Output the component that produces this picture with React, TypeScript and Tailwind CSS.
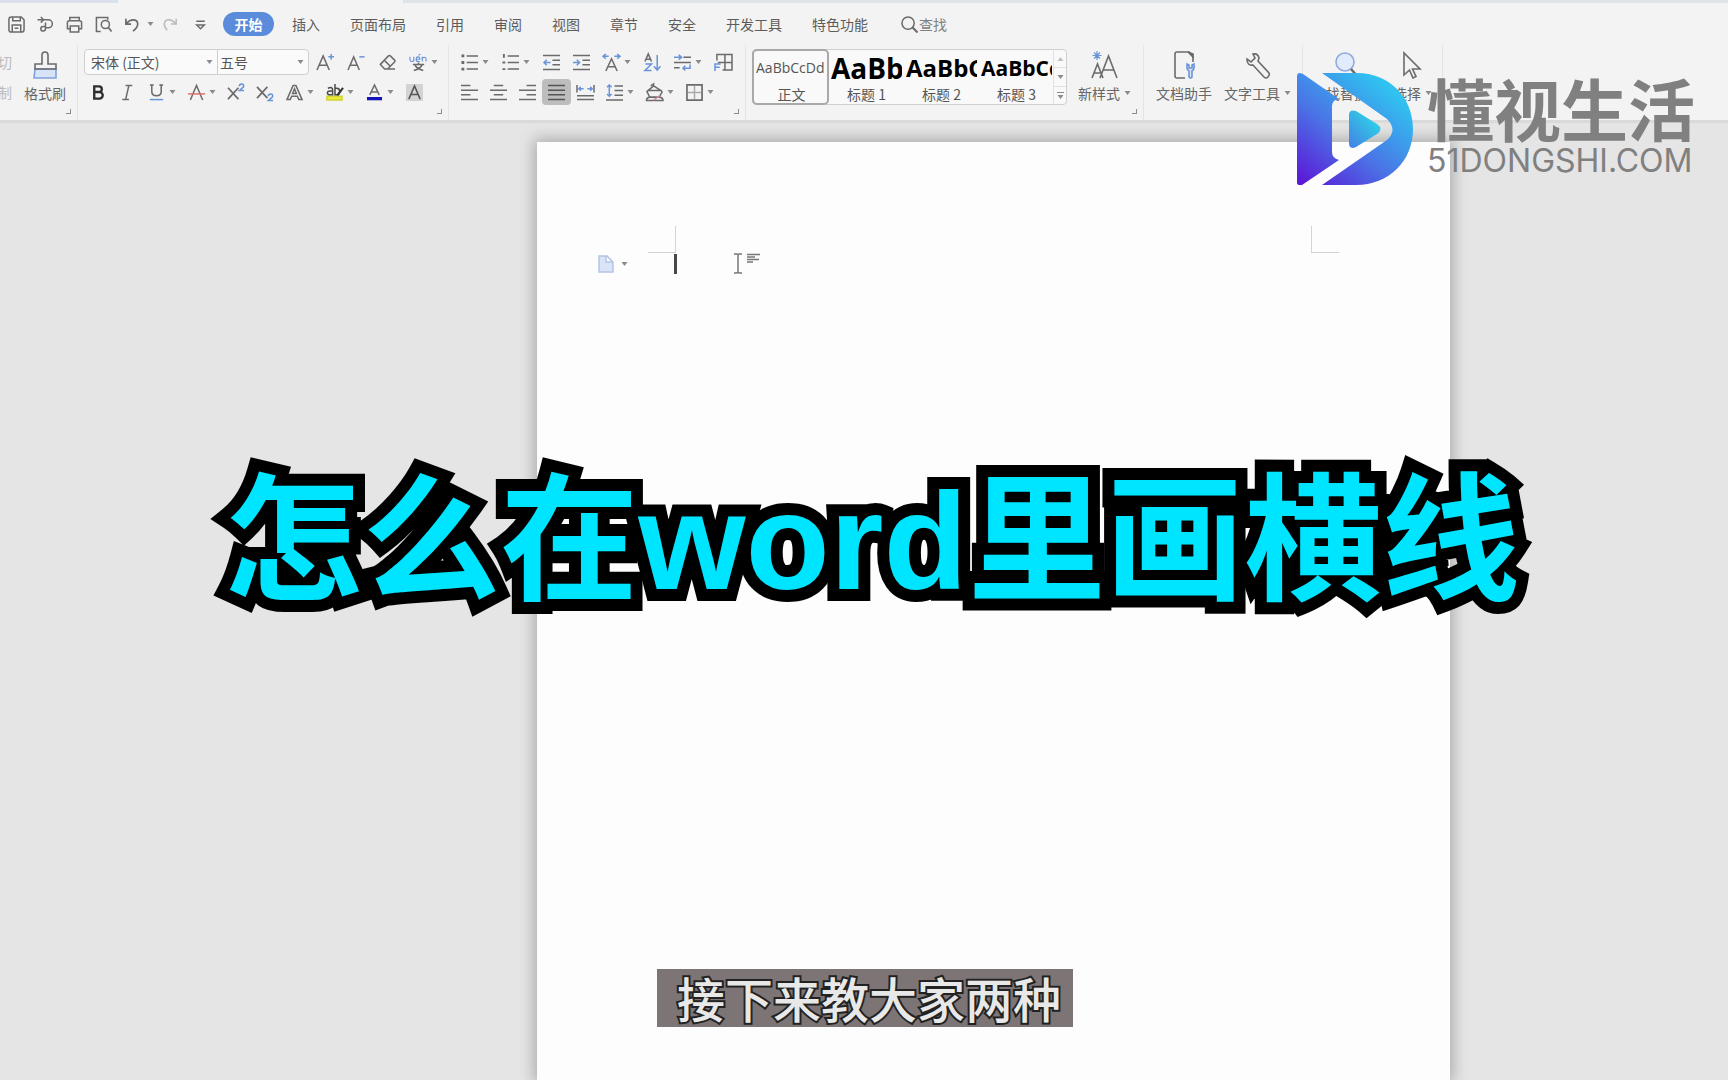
import type { ReactNode } from "react";
import clsx from "clsx";

const tabs = ["插入", "页面布局", "引用", "审阅", "视图", "章节", "安全", "开发工具", "特色功能"];

const styles = [
  { name: "正文", sample: "AaBbCcDd", className: "text-sm text-[#555]", active: true },
  { name: "标题 1", sample: "AaBbCc", className: "text-[28px] font-bold text-black" },
  { name: "标题 2", sample: "AaBbCc", className: "text-[24px] font-bold text-black" },
  { name: "标题 3", sample: "AaBbCcD", className: "text-[21px] font-bold text-black" },
];

const Icon = ({ children, className }: { children: ReactNode; className?: string }) => (
  <svg
    viewBox="0 0 18 18"
    className={clsx("w-[17px] h-[17px] shrink-0 overflow-visible", className)}
    fill="none"
    stroke="#6b6b6b"
    strokeWidth="1.6"
    aria-hidden="true"
  >
    {children}
  </svg>
);

const Caret = ({ className }: { className?: string }) => (
  <svg viewBox="0 0 7 4" className={clsx("w-[7px] h-1 shrink-0", className)} fill="#8a8a8a" aria-hidden="true">
    <path d="M0.5 0h6L3.5 4z" />
  </svg>
);

const Tool = ({
  label,
  caret,
  active,
  children,
}: {
  label: string;
  caret?: boolean;
  active?: boolean;
  children: ReactNode;
}) => (
  <button
    aria-label={label}
    className={clsx("h-[26px] px-1.5 flex items-center gap-1 shrink-0", active && "bg-[#bdbdbd] rounded")}
  >
    <Icon>{children}</Icon>
    {caret && <Caret />}
  </button>
);

const BigTool = ({ label, caret, children }: { label: string; caret?: boolean; children: ReactNode }) => (
  <button className="h-14 pt-0.5 flex flex-col items-center shrink-0">
    <svg viewBox="0 0 28 28" className="w-7 h-7" fill="none" stroke="#6b6b6b" strokeWidth="1.6" aria-hidden="true">
      {children}
    </svg>
    <span className="mt-1 flex items-center gap-1 leading-5 whitespace-nowrap">
      {label}
      {caret && <Caret />}
    </span>
  </button>
);

const Group = ({ corner, className, children }: { corner?: boolean; className?: string; children: ReactNode }) => (
  <div className={clsx("flex flex-col pt-1 border-r border-[#e4e4e4] shrink-0", className)}>
    {children}
    {corner && <span className="mt-1 mr-1.5 self-end w-[5px] h-[5px] border-r border-b border-[#8c8c8c]" />}
  </div>
);

const QuickAccess = () => (
  <div className="flex items-center pl-2">
    <button aria-label="保存" className="w-[29px]">
      <Icon>
        <path d="M1 3.500Q1 1 3.500 1H14l3 3v10.500Q17 17 14.500 17h-11Q1 17 1 14.500zM5 1v4h8V1M4.500 17V9.500h9V17M7 13h4" />
      </Icon>
    </button>
    <button aria-label="输出为PDF" className="w-[29px]">
      <Icon>
        <path d="M0.500 4H12a4 4 0 0 1 0 8.500H9V13q0 3-2.500 3T4 13.500 6.500 11H9V7M4 1l3 3-3 3" />
      </Icon>
    </button>
    <button aria-label="打印" className="w-[29px]">
      <Icon>
        <path d="M4 5V1.500h10V5M4 13.500H1.500V7Q1.500 5 3.500 5h11Q16.500 5 16.500 7v6.500H14M4.500 10.500h9V17h-9z" />
      </Icon>
    </button>
    <button aria-label="打印预览" className="w-[29px]">
      <Icon>
        <path d="M6 16.500H1.500V1.500h12V4" />
        <circle cx="11" cy="9" r="4.300" />
        <path d="M14 12l3.500 4.500" strokeWidth="1.800" />
      </Icon>
    </button>
    <button aria-label="撤销" className="flex items-center gap-1.5">
      <Icon>
        <path d="M2 3v5.500h5.500M2.500 8Q6 4 9.500 4q5 0 5 4.500 0 4-5 7.500" strokeWidth="1.800" />
      </Icon>
      <Caret />
    </button>
    <button aria-label="恢复" className="ml-2 w-[30px]">
      <Icon className="opacity-40">
        <path d="M15 3v5.500H9.500M14.500 8Q11 4 7.500 4q-5 0-5 4.500 0 4 3 6.500" strokeWidth="1.600" />
      </Icon>
    </button>
    <button aria-label="自定义快速访问工具栏">
      <Icon>
        <path d="M4.500 5.500h9M5 9.500h8l-4 4z" />
      </Icon>
    </button>
  </div>
);

const TabBar = () => (
  <div className="h-[42px] flex items-center text-sm text-[#5c5c5c]">
    <QuickAccess />
    <button className="ml-3.5 w-[51px] h-6 rounded-full bg-[#5b8bdb] text-white font-bold leading-6">开始</button>
    <nav className="ml-[18px] flex gap-[30px]">
      {tabs.map((tab) => (
        <button key={tab} className="whitespace-nowrap">
          {tab}
        </button>
      ))}
    </nav>
    <label className="ml-[33px] flex items-center">
      <Icon>
        <circle cx="7.500" cy="7.500" r="6.500" />
        <path d="M12 12l5.500 5.500" strokeWidth="2.200" />
      </Icon>
      <input aria-label="查找" placeholder="查找" className="w-20 ml-px bg-transparent outline-none placeholder:text-[#808080]" />
    </label>
  </div>
);

const FontGroup = () => (
  <Group corner className="w-[371px] pl-1.5">
    <div className="flex items-center gap-0.5">
      <div className="flex h-[26px] rounded border border-[#cfcfcf] bg-[#fafafa] text-[#555]">
        <label className="flex items-center w-[133px] pr-1 border-r border-[#cfcfcf]">
          <select aria-label="字体" className="appearance-none w-full h-full pl-1.5 bg-transparent outline-none">
            <option>宋体 (正文)</option>
          </select>
          <Caret />
        </label>
        <label className="flex items-center w-[90px] pr-1">
          <select aria-label="字号" className="appearance-none w-full h-full pl-0.5 bg-transparent outline-none">
            <option>五号</option>
          </select>
          <Caret />
        </label>
      </div>
      <Tool label="增大字号">
        <path d="M0 17L6.500 2 13 17M2.500 12h8" />
        <path d="M15 0v6M12 3h6" stroke="#6a94d8" />
      </Tool>
      <Tool label="减小字号">
        <path d="M0 17L6 3l6 14M2.500 12H10" />
        <path d="M12 3h5.500" stroke="#6a94d8" />
      </Tool>
      <Tool label="清除格式">
        <path d="M1.500 11L10 2q1-1 2 0l4.500 4.500q1 1 0 2L9 16H6zM6 7l6 6M6 16h11" />
      </Tool>
      <Tool label="拼音指南" caret>
        <path d="M0 3v3q0 2 2 2t2-2V3v5M6.500 5.500h4Q10.500 3 8.500 3T6.500 5.500 8.500 8h2M13 8V3v3q0-2.500 2-2.500T17 5.500V8M9 1.500L11 0" stroke="#6a94d8" strokeWidth="1.200" />
        <path d="M3 11h12M9 9v2M13 11q-2 5-9 6.500M5 11q2 5 9 6.500" />
      </Tool>
    </div>
    <div className="flex items-center mt-1">
      <Tool label="加粗">
        <path d="M4.500 2.500v13H10a3.400 3.400 0 0 0 0-7H5h4.500a3 3 0 0 0 0-6z" stroke="#2e2e2e" strokeWidth="2.500" />
      </Tool>
      <Tool label="倾斜">
        <path d="M7 1.500h7M3.500 16.500h7M10.500 1.500l-3.500 15" />
      </Tool>
      <Tool label="下划线" caret>
        <path d="M4 1v7q0 4.500 5 4.500t5-4.500V1M2 1h4M12 1h4" />
        <path d="M2 16.500h14" stroke="#6a94d8" />
      </Tool>
      <Tool label="删除线" caret>
        <path d="M2.500 17L9 1.500 15.500 17" />
        <path d="M0 10.500h18" stroke="#e07070" />
      </Tool>
      <Tool label="上标">
        <path d="M0 4l11 12M11 4L0 16" strokeWidth="1.800" />
        <path d="M12 2.500Q12 0 14.500 0t2 3L12 7h5" stroke="#6a94d8" />
      </Tool>
      <Tool label="下标">
        <path d="M0 3l11 12M11 3L0 15" strokeWidth="1.800" />
        <path d="M12 13q0-2.500 2.500-2.500t2 3L12 17.500h5" stroke="#6a94d8" />
      </Tool>
      <Tool label="文字效果" caret>
        <path d="M1 16.500L7.500 1.500h3l6.500 15h-3.500L12 13H6l-1.500 3.500zM7 10l2-5 2 5z" />
      </Tool>
      <Tool label="突出显示" caret>
        <path d="M1 13h16v4H1z" fill="#e8ea3c" stroke="#d2d430" />
        <path d="M2 4.500Q7 2.500 7 6v5.500H4q-2.500 0-2.500-2.200T7 7.500M9.500 0v11.500h2q3 0 3-3.500t-3-3.500h-2" stroke="#4c4c4c" />
        <path d="M18 4l-6 8" stroke="#333" strokeWidth="2.200" />
      </Tool>
      <Tool label="字体颜色" caret>
        <path d="M4 11.500L9 1l5 10.500M5.500 8.500h7" />
        <path d="M1 15.500h16" stroke="#1414b8" strokeWidth="3.500" />
      </Tool>
      <Tool label="字符底纹">
        <path d="M0 0h18v18H0z" fill="#d3d3d3" stroke="none" />
        <path d="M3 16L9 2l6 14M5 11h8" stroke="#555" />
      </Tool>
    </div>
  </Group>
);

const ParagraphGroup = () => (
  <Group corner className="w-[297px] pl-1.5">
    <div className="flex items-center gap-px">
      <Tool label="项目符号" caret>
        <path d="M6 2h12M6 9h12M6 16h12" />
        <path d="M0.500 2h3M0.500 9h3M0.500 16h3" strokeWidth="3" />
      </Tool>
      <Tool label="编号" caret>
        <path d="M6 2h12M6 9h12M6 16h12" />
        <path d="M2 0v4M1 1h1M0.500 9h3M0.500 16h3" strokeWidth="2" />
      </Tool>
      <Tool label="减少缩进量">
        <path d="M0 1.500h18M10 6.500h8M10 11.500h8M0 16.500h18" />
        <path d="M8 9H1M4 6L1 9l3 3" stroke="#6a94d8" />
      </Tool>
      <Tool label="增加缩进量">
        <path d="M0 1.500h18M10 6.500h8M10 11.500h8M0 16.500h18" />
        <path d="M0 9h7M4 6l3 3-3 3" stroke="#6a94d8" />
      </Tool>
      <Tool label="中文版式" caret>
        <path d="M3 18L9 5l6 13M5 13.500h8" />
        <path d="M6 2.500H0M3 0L0 2.500 3 5M12 2.500h6M15 0l3 2.500L15 5" stroke="#6a94d8" />
      </Tool>
      <Tool label="排序">
        <path d="M1 8l3.500-8L8 8M2 5.500h5" />
        <path d="M1.500 10.500H8L1 17.500h7M14 1v15.500M10.500 13l3.500 4 3.500-4" stroke="#6a94d8" />
      </Tool>
      <Tool label="显示段落标记" caret>
        <path d="M10 3.500h8M0 9h18M0 14.500h6" />
        <path d="M0 3.500h7M5 1l3 2.500L5 6M17 11v4h-7M12 12.500L9.500 15l2.500 2.500" stroke="#6a94d8" />
      </Tool>
      <Tool label="制表位">
        <path d="M2 7V0.500h16v16.500H8M10.500 1v16M3 9h15" />
        <path d="M0 18V10.500h6M0 14h5" stroke="#6a94d8" />
      </Tool>
    </div>
    <div className="flex items-center mt-1">
      <Tool label="左对齐">
        <path d="M0 1.500h10M0 6.500h18M0 11.500h10M0 16.500h18" />
      </Tool>
      <Tool label="居中对齐">
        <path d="M4 1.500h10M0 6.500h18M4 11.500h10M0 16.500h18" />
      </Tool>
      <Tool label="右对齐">
        <path d="M8 1.500h10M0 6.500h18M8 11.500h10M0 16.500h18" />
      </Tool>
      <Tool label="两端对齐" active>
        <path d="M0 1.500h18M0 6.500h18M0 11.500h18M0 16.500h18" stroke="#555" />
      </Tool>
      <Tool label="分散对齐">
        <path d="M0 1v8M18 1v8M0 12.500h18M0 16.500h18" />
        <path d="M2 5h5M4 3L2 5l2 2M11 5h5M14 3l2 2-2 2" stroke="#6a94d8" />
      </Tool>
      <Tool label="行距" caret>
        <path d="M9 2h9M9 7h9M9 12h9M0 17h18" />
        <path d="M3.500 1v12M1 3.500L3.500 1 6 3.500M1 10.500L3.500 13 6 10.500" stroke="#6a94d8" />
      </Tool>
      <Tool label="底纹颜色" caret>
        <path d="M5 2l3-2v3M8 2l8 5q1.500 1 0.500 2.500L14 14H4L1 8zM2 7h14" />
        <path d="M0.500 17.500q0-3.500 4-3.500H14q4 0 4 3.500z" />
        <path d="M8 17l7-5" stroke="#d98a9a" />
      </Tool>
      <Tool label="边框" caret>
        <path d="M1 1h16v16H1z" strokeWidth="1.800" />
        <path d="M9 2v14M2 9h14" stroke="#aaa" />
      </Tool>
    </div>
  </Group>
);

const StylesGroup = () => (
  <Group corner className="w-[398px] pl-1.5">
    <div className="flex">
      <div className="flex w-[315px] h-14 rounded border border-[#cfcfcf] bg-[#f9f9f9]">
        {styles.map((style) => (
          <button
            key={style.name}
            className={clsx(
              "w-[75px] shrink-0 flex flex-col items-center overflow-hidden pl-[3px] pr-px",
              style.active && "outline-2 -outline-offset-1 outline-[#a9a9a9] rounded-sm"
            )}
          >
            <span
              className={clsx("w-full h-9 shrink-0 overflow-hidden text-left font-['Open_Sans',sans-serif] leading-9", style.className)}
            >
              {style.sample}
            </span>
            <span className="leading-4 text-[#555]">{style.name}</span>
          </button>
        ))}
        <div className="flex-1 flex flex-col border-l border-[#e2e2e2]">
          <button aria-label="上一行" className="flex-1 flex items-center justify-center">
            <Caret className="rotate-180 opacity-50" />
          </button>
          <button aria-label="下一行" className="flex-1 flex items-center justify-center border-y border-[#e2e2e2]">
            <Caret />
          </button>
          <button aria-label="更多样式" className="flex-1 flex flex-col items-center justify-center gap-0.5">
            <span className="w-[7px] h-px bg-[#8a8a8a]" />
            <Caret />
          </button>
        </div>
      </div>
      <div className="ml-[11px]">
        <BigTool label="新样式" caret>
          <path d="M1 27l5.500-14L12 27M3 22h7M9 27L17.500 5 26 27M12 19h11" />
          <path d="M6 0v9M1.500 4.500h9M3 1.500l6 6M9 1.500l-6 6" stroke="#6a94d8" strokeWidth="1.200" />
        </BigTool>
      </div>
    </div>
  </Group>
);

const Ribbon = () => (
  <header className="bg-[#f3f3f3] border-b-[3px] border-[#dadada] overflow-hidden">
    <div className="flex h-[3px]">
      <span className="w-[118px] bg-[#dbe1ec]" />
      <span className="w-[285px]" />
      <span className="flex-1 bg-[#dfe4ea]" />
    </div>
    <TabBar />
    <div className="flex h-[75px] text-sm text-[#666]">
      <Group corner className="w-[78px]">
        <div className="flex">
          <div className="w-3 flex flex-col gap-1 text-[#bbb] leading-[26px]">
            <button className="w-3 flex justify-end whitespace-nowrap">剪切</button>
            <button className="w-3 flex justify-end whitespace-nowrap">复制</button>
          </div>
          <div className="ml-3">
            <BigTool label="格式刷">
              <path d="M4 18h21v9H3z" fill="#d6e3f8" stroke="#7fa3dc" />
              <path d="M4 18v-5h7V4q0-3 3-3t3 3v9h8v5z" />
            </BigTool>
          </div>
        </div>
      </Group>
      <FontGroup />
      <ParagraphGroup />
      <StylesGroup />
      <Group className="w-[159px] pl-3">
        <div className="flex gap-3">
          <BigTool label="文档助手">
            <path d="M15 27H7q-2 0-2-2V3q0-2 2-2h12l4 4v6" />
            <path d="M18 1l5 5v-3z" fill="#444" />
            <path d="M17 13v4q0 2 2 3v6q1.500 2 3 0v-6q2-1 2-3v-4l-2 1v3h-3v-3z" stroke="#6a94d8" fill="#d6e3f8" />
          </BigTool>
          <BigTool label="文字工具" caret>
            <path d="M9 3q5-1 6 4l-1 3 11 12q1 2-1 4t-4 0L9 14q-6 1-6-6l4 3 4-4z" />
          </BigTool>
        </div>
      </Group>
      <Group className="w-[140px] pl-[9px]">
        <div className="flex gap-3.5">
          <BigTool label="查找替换" caret>
            <circle cx="13" cy="11" r="9" fill="#e2ebfb" stroke="#8facdf" />
            <path d="M19 18l7 8" strokeWidth="2.500" />
          </BigTool>
          <BigTool label="选择" caret>
            <path d="M5 2v22l5.500-5 3.500 8 3-1.500-3.500-7.500H21z" />
          </BigTool>
        </div>
      </Group>
    </div>
  </header>
);

const Workspace = () => (
  <main className="flex-1 flex pt-[19px] pl-[537px] pr-[278px] bg-[#e5e5e5]">
    <article className="flex-1 pt-[84px] bg-[#fdfdfd] shadow-[0_0_14px_3px_rgba(0,0,0,0.26)]">
      <div className="flex justify-between px-[111px]">
        <span className="w-7 h-[27px] border-r border-b border-[#d4d4d4]" />
        <span className="w-7 h-[27px] border-l border-b border-[#d4d4d4]" />
      </div>
      <div className="flex items-center h-[22px] pl-[61px]">
        <button aria-label="粘贴选项" className="flex items-center gap-[7px]">
          <svg viewBox="0 0 16 18" className="w-4 h-[18px]" fill="#dbe4f6" stroke="#b3c3e6" strokeWidth="1.500" aria-hidden="true">
            <path d="M1 1h8l6 6v10H1zM8 1v6h7" />
          </svg>
          <Caret />
        </button>
        <span className="ml-[46px] w-[3px] h-5 bg-[#484848]" />
        <svg viewBox="0 0 28 22" className="ml-[56px] w-7 h-[22px]" fill="none" stroke="#777" strokeWidth="1.500" aria-hidden="true">
          <path d="M1 1h3l1 1 1-1h3M5 2v17M1 20h3l1-1 1 1h3M14 1.500h13M14 4h8M14 6.500h12M14 9h6" />
        </svg>
      </div>
    </article>
  </main>
);

const Watermark = () => (
  <div className="absolute top-[73px] right-[21px] flex items-start gap-3.5 text-[#808080]">
    <svg viewBox="0 0 116 112" className="w-[116px] h-[112px]" aria-hidden="true">
      <defs>
        <linearGradient id="brand" x1="0" y1="112" x2="85" y2="10" gradientUnits="userSpaceOnUse">
          <stop offset="0" stopColor="#5d12d6" />
          <stop offset="0.5" stopColor="#4a74e6" />
          <stop offset="1" stopColor="#30c2f0" />
        </linearGradient>
        <linearGradient id="play" x1="52" y1="74" x2="80" y2="48" gradientUnits="userSpaceOnUse">
          <stop offset="0" stopColor="#4480e6" />
          <stop offset="1" stopColor="#2fd0e6" />
        </linearGradient>
      </defs>
      <path
        d="M0 3Q0 0 3 0L6 1 42 26Q35 27 35 33V79Q35 85 42 87L5 112H2Q0 112 0 109zM25 0H60C92 0 116 24 116 56S92 112 59 112H25L90 67Q101 57 90 46z"
        fill="url(#brand)"
      />
      <path d="M52 42Q52 36 59 38L80 51Q87 56 80 61L59 74Q52 77 52 70z" fill="url(#play)" />
    </svg>
    <div className="w-[280px] flex flex-col">
      <span className="h-[70px] text-[67px] leading-[68px] font-bold whitespace-nowrap">懂视生活</span>
      <span className="font-['Inter',sans-serif] text-[32px] leading-[36px] whitespace-nowrap">51DONGSHI.COM</span>
    </div>
  </div>
);

export default function App() {
  return (
    <div className="relative h-screen flex flex-col overflow-hidden font-['Noto_Sans_CJK_SC',sans-serif]">
      <Ribbon />
      <Workspace />
      <Watermark />
      <h1 className="absolute inset-x-0 top-[441px] pl-4 text-center font-['Liberation_Sans','Noto_Sans_CJK_SC',sans-serif] text-[138px] leading-[200px] font-bold text-[#00e5ff] whitespace-nowrap [-webkit-text-stroke:24px_#000] [paint-order:stroke_fill]">
        怎么在word里画横线
      </h1>
      <div className="absolute inset-x-0 bottom-[53px] pl-0.5 flex justify-center">
        <p className="pl-5 pr-3 pb-0.5 bg-[#7d7575] text-[48px] leading-[56px] font-medium text-[#e8e8e8] [-webkit-text-stroke:4px_#222] [paint-order:stroke_fill]">
          接下来教大家两种
        </p>
      </div>
    </div>
  );
}
